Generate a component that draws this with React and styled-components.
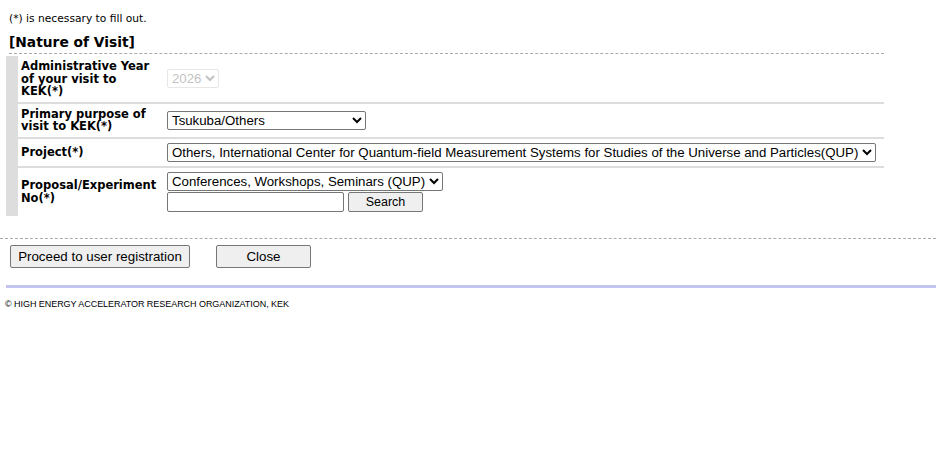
import React from 'react';
import styled, { createGlobalStyle } from 'styled-components';

const GlobalStyle = createGlobalStyle`
    body {
        margin: 0;
        background: #fff;
        color: #000;
        font-family: "Liberation Sans", Arial, sans-serif;
    }
`;

const projects = [
    'Others, International Center for Quantum-field Measurement Systems for Studies of the Universe and Particles(QUP)',
];

export default function App() {
    return (
        <>
            <GlobalStyle />
            <Page>
                <Note>(*) is necessary to fill out.</Note>
                <Heading>[Nature of Visit]</Heading>
                <FormTable>
                    <tbody>
                        <Row>
                            <Label>
                                Administrative Year
                                <br />
                                of your visit to
                                <br />
                                KEK(*)
                            </Label>
                            <Field>
                                <Select disabled defaultValue="2026">
                                    <option>2026</option>
                                </Select>
                            </Field>
                        </Row>
                        <Row>
                            <Label>
                                Primary purpose of
                                <br />
                                visit to KEK(*)
                            </Label>
                            <Field>
                                <Select $width={199}>
                                    <option>Tsukuba/Others</option>
                                </Select>
                            </Field>
                        </Row>
                        <Row>
                            <Label>Project(*)</Label>
                            <Field>
                                <Select>
                                    {projects.map((p) => (
                                        <option key={p}>{p}</option>
                                    ))}
                                </Select>
                            </Field>
                        </Row>
                        <Row $last>
                            <Label>
                                Proposal/Experiment
                                <br />
                                No(*)
                            </Label>
                            <Field>
                                <Select>
                                    <option>Conferences, Workshops, Seminars (QUP)</option>
                                </Select>
                                <SearchLine>
                                    <TextInput type="text" />
                                    <Button $width={75}>Search</Button>
                                </SearchLine>
                            </Field>
                        </Row>
                    </tbody>
                </FormTable>
                <Actions>
                    <Button $width={180} $big>Proceed to user registration</Button>
                    <Button $width={95} $big>Close</Button>
                </Actions>
                <Rule />
                <Footer>© HIGH ENERGY ACCELERATOR RESEARCH ORGANIZATION, KEK</Footer>
            </Page>
        </>
    );
}

const Page = styled.div`
    width: 936px;
    padding-top: 12px;
`;

const Note = styled.div`
    margin-left: 9px;
    font-family: "DejaVu Sans", sans-serif;
    font-size: 10.7px;
    line-height: 14px;
`;

const Heading = styled.div`
    margin: 7px 0 0 9px;
    font-family: "DejaVu Sans", sans-serif;
    font-weight: bold;
    font-size: 13.8px;
    line-height: 18px;
    padding-bottom: 2px;
    width: 875px;
    border-bottom: 1px dashed #aaa;
`;

const FormTable = styled.table`
    margin: 2px 0 0 6px;
    width: 878px;
    border-collapse: collapse;
    border-left: 12px solid #ddd;
`;

const Row = styled.tr`
    border-bottom: ${(p) => (p.$last ? 'none' : '2px solid #ddd')};
`;

const Label = styled.td`
    width: 143px;
    padding: 4px 0 4px 3px;
    vertical-align: middle;
    font-family: "DejaVu Sans", sans-serif;
    font-weight: bold;
    font-size: 11.5px;
    line-height: 12.5px;
    white-space: nowrap;
`;

const Field = styled.td`
    padding: 4px 0 4px 3px;
    vertical-align: middle;
`;

const Select = styled.select`
    display: block;
    height: 19px;
    width: ${(p) => (p.$width ? `${p.$width}px` : 'auto')};
    font-family: "Liberation Sans", Arial, sans-serif;
    font-size: 13.25px;
    border: 1px solid #767676;
    border-radius: 2px;
    background: #fff;
    color: #000;
    padding: 0;

    &:disabled {
        color: #aaa;
        border-color: #ddd;
    }
`;

const SearchLine = styled.div`
    display: flex;
    gap: 4px;
    margin-top: 1px;
`;

const TextInput = styled.input`
    width: 177px;
    height: 20px;
    box-sizing: border-box;
    border: 1px solid #767676;
    border-radius: 2px;
`;

const Button = styled.button`
    width: ${(p) => p.$width}px;
    height: ${(p) => (p.$big ? 23 : 20)}px;
    box-sizing: border-box;
    padding: 0;
    font-family: "Liberation Sans", Arial, sans-serif;
    font-size: ${(p) => (p.$big ? '13.33px' : '12.5px')};
    color: #000;
    background: #efefef;
    border: 1px solid #767676;
    border-radius: 2px;
`;

const Actions = styled.div`
    margin-top: 22px;
    border-top: 1px dashed #aaa;
    padding: 6px 0 17px 10px;
    display: flex;
    gap: 26px;
`;

const Rule = styled.div`
    margin-left: 6px;
    height: 3px;
    background: #c4c4f0;
`;

const Footer = styled.div`
    margin: 10px 0 0 5px;
    font-family: "Liberation Sans", Arial, sans-serif;
    font-size: 9px;
    letter-spacing: -0.05px;
    line-height: 12px;
`;
